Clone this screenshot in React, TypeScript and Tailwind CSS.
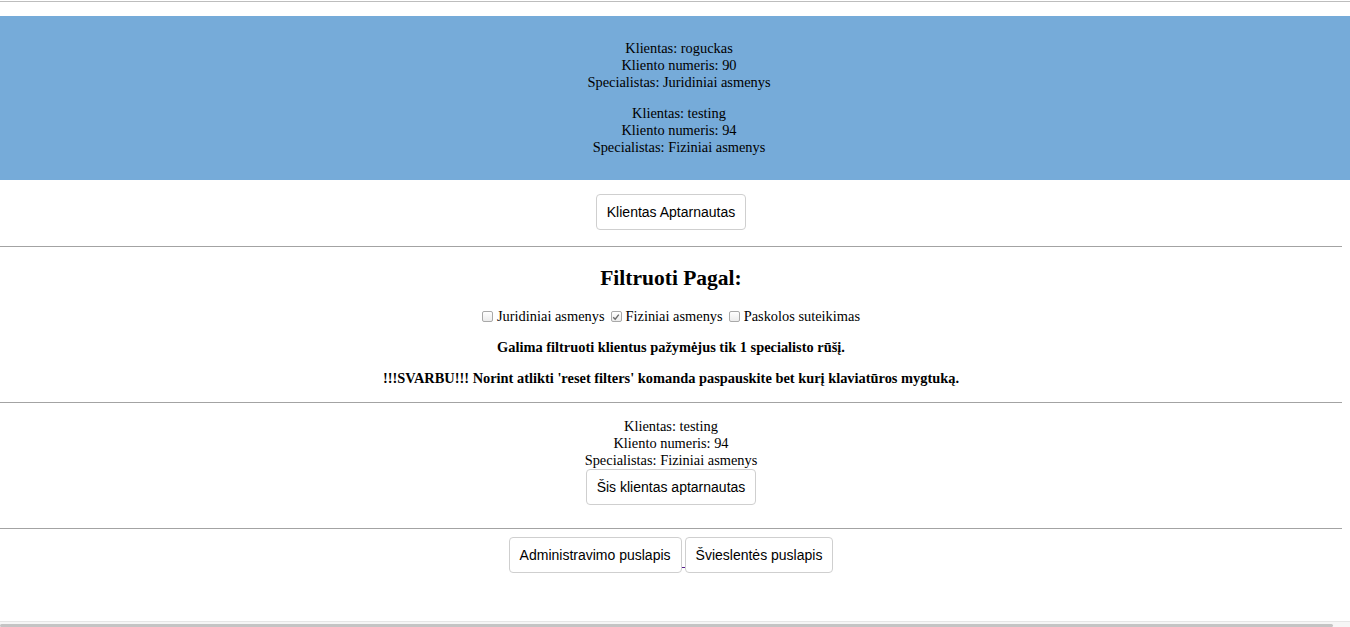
import React from "react";

type Client = {
  name: string;
  number: number;
  specialist: string;
};

const queue: Client[] = [
  { name: "roguckas", number: 90, specialist: "Juridiniai asmenys" },
  { name: "testing", number: 94, specialist: "Fiziniai asmenys" },
];

const filters = [
  { label: "Juridiniai asmenys", checked: false },
  { label: "Fiziniai asmenys", checked: true },
  { label: "Paskolos suteikimas", checked: false },
];

const btn =
  "h-[36px] px-[10px] bg-white border border-[#cfcfcf] rounded-[4px] font-['Liberation_Sans',Arial,sans-serif] text-[14px] text-black";

function Checkbox({ checked }: { checked: boolean }) {
  return (
    <span className="inline-flex w-[11px] h-[11px] items-center justify-center rounded-[2px] border border-[#a9a9a9] bg-gradient-to-b from-white to-[#ececec] mr-[4px]">
      {checked && (
        <svg width="8" height="8" viewBox="0 0 8 8">
          <path d="M1.2 4.2 L3.2 6.2 L6.8 1.6" fill="none" stroke="#6b6b6b" strokeWidth="1.4" />
        </svg>
      )}
    </span>
  );
}

function ClientInfo({ client }: { client: Client }) {
  return (
    <div className="leading-[17px]">
      <div>Klientas: {client.name}</div>
      <div>Kliento numeris: {client.number}</div>
      <div>Specialistas: {client.specialist}</div>
    </div>
  );
}

export default function App() {
  return (
    <div className="h-[627px] w-[1350px] flex flex-col bg-white text-black text-center font-['Liberation_Serif','Times_New_Roman',serif] text-[14.4px] overflow-hidden">
      {/* top border */}
      <div className="mt-[1px] h-px bg-[#bdbdbd]" />

      {/* QUEUE */}
      <div className="mt-[14px] h-[164px] bg-[#76abd9] pt-[24px] pl-[8px] flex flex-col gap-[14px]">
        {queue.map((c) => (
          <ClientInfo key={c.number} client={c} />
        ))}
      </div>

      <div className="w-[1342px] flex flex-col items-center">
        <div className="pt-[14px]">
          <button className={btn}>Klientas Aptarnautas</button>
        </div>

        <div className="mt-[16px] h-px w-full bg-[#a3a3a3]" />

        {/* FILTERS */}
        <h2 className="mt-[19px] font-bold text-[21.5px] leading-[24px]">Filtruoti Pagal:</h2>

        <div className="mt-[18px] flex justify-center items-center gap-[6px] leading-[17px]">
          {filters.map((f) => (
            <label key={f.label} className="inline-flex items-center">
              <Checkbox checked={f.checked} />
              {f.label}
            </label>
          ))}
        </div>

        <p className="mt-[14px] font-bold leading-[17px]">
          Galima filtruoti klientus pažymėjus tik 1 specialisto rūšį.
        </p>
        <p className="mt-[14px] font-bold leading-[17px]">
          !!!SVARBU!!! Norint atlikti 'reset filters' komanda paspauskite bet kurį klaviatūros mygtuką.
        </p>

        <div className="mt-[15px] h-px w-full bg-[#a3a3a3]" />

        {/* FILTERED */}
        <div className="mt-[15px] flex flex-col items-center">
          <ClientInfo client={queue[1]} />
          <button className={btn}>Šis klientas aptarnautas</button>
        </div>

        <div className="mt-[23px] h-px w-full bg-[#a3a3a3]" />

        {/* NAV */}
        <div className="mt-[8px] flex justify-center items-end">
          <button className={btn}>Administravimo puslapis</button>
          <span className="mb-[5px] w-[3px] h-px bg-[#551a8b]" />
          <button className={btn}>Švieslentės puslapis</button>
        </div>
      </div>

      {/* scrollbar strip */}
      <div className="mt-auto h-[6px] bg-[#f6f6f6] border-t border-[#e6e6e6]">
        <div className="mt-[2px] w-[1333px] h-[3px] rounded-full bg-[#c4c4c4]" />
      </div>
    </div>
  );
}
